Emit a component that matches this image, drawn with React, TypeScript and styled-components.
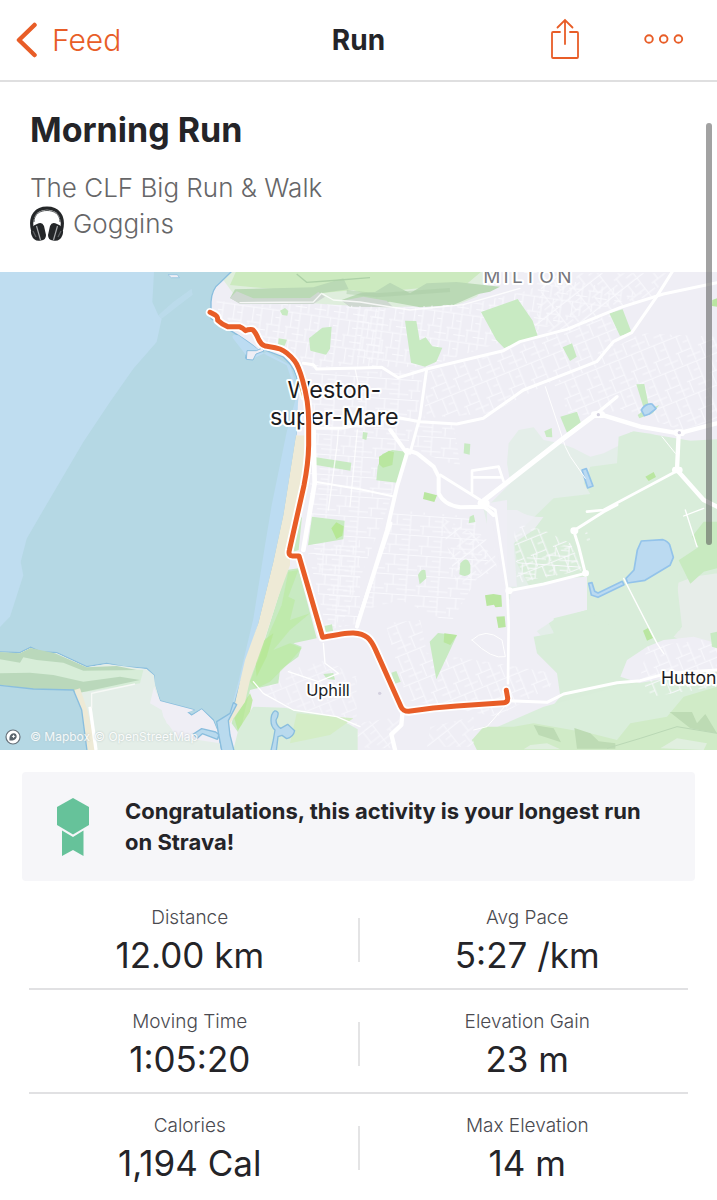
import React from "react";
import styled, { createGlobalStyle } from "styled-components";

const GlobalStyle = createGlobalStyle`
  * { box-sizing: border-box; }
  body {
    margin: 0;
    background: #ffffff;
    color: #242428;
    font-family: Inter, "Liberation Sans", sans-serif;
  }
  h1, h2, p, dl, dd, dt { margin: 0; }
`;

const Screen = styled.div`
  position: relative;
  width: 100%;
  overflow: hidden;
`;

const TopBar = styled.header`
  display: grid;
  grid-template-columns: 1fr auto 1fr;
  align-items: center;
  height: 82px;
  padding: 0 16px;
  border-bottom: 2px solid #dfdfe0;
`;

const BackLink = styled.a`
  display: flex;
  align-items: center;
  gap: 15px;
  color: #e85d27;
  font-size: 30px;
  font-weight: 300;
  line-height: 40px;
  text-decoration: none;
`;

const BarTitle = styled.h1`
  font-size: 28px;
  font-weight: 700;
  line-height: 40px;
`;

const Actions = styled.div`
  display: flex;
  justify-content: flex-end;
  align-items: center;
  gap: 62px;
  padding: 0 16px 2px 0;
`;

const IconButton = styled.button`
  display: flex;
  padding: 0;
  border: 0;
  background: none;
  color: #e85d27;
  cursor: pointer;
`;

const Intro = styled.section`
  padding: 26px 30px 30px;
`;

const ActivityTitle = styled.h2`
  font-size: 34px;
  font-weight: 700;
  line-height: 44px;
`;

const Description = styled.div`
  margin-top: 18px;
  color: #666668;
  font-size: 26px;
  font-weight: 300;
  line-height: 36px;
`;

const Playlist = styled.p`
  display: flex;
  align-items: center;
  gap: 9px;
`;

const MapPanel = styled.section`
  position: relative;
  overflow: hidden;
`;

const MapDrawing = styled.svg`
  display: block;
  width: 100%;
  height: auto;
`;

const Attribution = styled.div`
  position: absolute;
  left: 5px;
  bottom: 4px;
  display: flex;
  align-items: center;
  gap: 9px;
  font-size: 12px;
  line-height: 18px;
`;

const Credits = styled.span`
  display: flex;
  gap: 4px;
`;

const Credit = styled.a`
  color: #ffffff;
  opacity: 0.85;
  text-decoration: none;
  text-shadow: 0 0 2px #a8b8b8;
`;

const Achievement = styled.section`
  display: flex;
  align-items: center;
  gap: 35px;
  min-height: 109px;
  margin: 22px 22px 0;
  padding: 20px 34px;
  border-radius: 4px;
  background: #f6f6f9;

  svg { flex-shrink: 0; }
`;

const AchievementText = styled.p`
  font-size: 22px;
  font-weight: 700;
  line-height: 31px;
`;

const Stats = styled.dl`
  padding: 5px 22px 0;
`;

const StatRow = styled.div`
  position: relative;
  display: grid;
  grid-template-columns: 1fr 2px 1fr;
  align-items: center;
  height: 104px;

  &:not(:last-child)::after {
    content: "";
    position: absolute;
    right: 7px;
    bottom: 0;
    left: 7px;
    height: 2px;
    background: #e1e1e3;
  }
`;

const StatDivider = styled.span`
  height: 44px;
  margin-top: 4px;
  background: #e4e4e5;
`;

const Stat = styled.div`
  padding-top: 6px;
  text-align: center;
`;

const StatLabel = styled.dt`
  color: #4a4a50;
  font-size: 19px;
  font-weight: 300;
  line-height: 28px;
`;

const StatValue = styled.dd`
  font-size: 35px;
  font-weight: 400;
  line-height: 46px;
`;

const ScrollThumb = styled.div`
  position: absolute;
  top: 123px;
  right: 5px;
  width: 6px;
  height: 422px;
  border-radius: 3px;
  background: rgba(90, 90, 90, 0.56);
`;

const BackIcon = () => (
  <svg width="21" height="36" viewBox="0 0 21 36" fill="none" aria-hidden="true">
    <path d="M18.500 3 3 18l15.500 15" stroke="currentColor" strokeWidth="4.500" strokeLinecap="round" strokeLinejoin="round" />
  </svg>
);

const ShareIcon = () => (
  <svg width="32" height="44" viewBox="0 0 32 44" fill="none" stroke="currentColor" strokeWidth="1.800" strokeLinecap="round" aria-hidden="true">
    <path d="M11 15H4Q3 15 3 16V40Q3 41 4 41H28Q29 41 29 40V16Q29 15 28 15H21" />
    <path d="M16 27V3M8.500 10.500 16 3l7.500 7.500" />
  </svg>
);

const MoreIcon = () => (
  <svg width="42" height="14" viewBox="0 0 42 14" fill="none" stroke="currentColor" strokeWidth="1.900" aria-hidden="true">
    <circle cx="6" cy="7" r="3.800" />
    <circle cx="20.700" cy="7" r="3.800" />
    <circle cx="35.400" cy="7" r="3.800" />
  </svg>
);

const HeadphonesIcon = () => (
  <svg width="34" height="36" viewBox="0 0 34 36" aria-hidden="true">
    <path d="M2.500 24C-1 9 7 2.200 17 2.200S35 9 31.500 24" fill="none" stroke="#252729" strokeWidth="3.200" />
    <path d="M4 16C4 8 10 4.500 17 4.500S30 8 30 16" fill="none" stroke="#55585a" strokeWidth="1" />
    <path d="M7 18Q12 15 14 20L16 29Q16 34 11 34.500 4 36 1.500 29-1 21 7 18z" fill="#242628" />
    <path d="M27 18Q22 15 20 20L18 29Q18 34 23 34.500 30 36 32.500 29 35 21 27 18z" fill="#242628" />
    <path d="M6.500 20 10.500 34M27.500 20 23.500 34" stroke="#a9abad" strokeWidth="1.200" />
    <path d="m3 25 3 6M31 25l-3 6" stroke="#5d6062" strokeWidth="1.300" />
  </svg>
);

const RibbonIcon = () => (
  <svg width="34" height="60" viewBox="0 0 34 60" fill="#66c29a" aria-hidden="true">
    <path d="M17 1 33 10V28L17 37.500 1 28V10z" />
    <path d="M6 33.500 17 40l10.500-6.500V59L17 53 6 59z" />
  </svg>
);

const MapboxIcon = () => (
  <svg width="16" height="16" viewBox="0 0 16 16" aria-hidden="true">
    <circle cx="8" cy="8" r="7" fill="#ffffff" stroke="#66717a" strokeWidth="1.200" />
    <path d="M4.500 11.500C4 7 6 4 9 4.300c3 .4 3.500 4 1.500 5.800-1.500 1.500-4 1.700-6 1.400z" fill="#59636b" />
    <path d="m8.500 5.500.7 1.200 1.300.6-1.300.6-.7 1.300-.7-1.300-1.200-.6 1.200-.6z" fill="#ffffff" />
  </svg>
);

/* Residential street meshes, one pattern for each street direction. */
const meshes = [
  { id: "mesh-a", angle: 8, w: 58, h: 84 },
  { id: "mesh-b", angle: -22, w: 72, h: 90 },
  { id: "mesh-c", angle: -38, w: 84, h: 76 },
  { id: "mesh-d", angle: 4, w: 96, h: 60 },
];

const StreetPattern = ({ id, angle, w, h }: { id: string; angle: number; w: number; h: number }) => (
  <pattern id={id} width={w} height={h} patternUnits="userSpaceOnUse" patternTransform={`rotate(${angle})`}>
    <path
      d={`M0 4H${w}M0 ${h * 0.58}H${w * 0.7}M${w * 0.28} 4V${h * 0.58}M${w * 0.7} 4V${h}M${w * 0.1} ${h * 0.58}V${h}M${w * 0.45} ${h * 0.3}H${w * 0.7}M${w * 0.4} ${h * 0.8}H${w}`}
      fill="none"
      stroke="#f9f9fd"
      strokeWidth="3"
    />
  </pattern>
);

/* The drawing uses three units per pixel, in four tiles that share one origin each. */
const NW = "translate(0 -6)";
const NE = "translate(1071 -6)";
const SW = "translate(0 714)";
const SE = "translate(1071 714)";

const ROUTE =
  "M630 121 646 129Q654 134 653 145 664 156 683 164L718 164Q730 169 737 176 744 172 758 173 767 180 776 203 783 218 795 222C810 225 820 224 840 231 858 238 872 252 884 267 896 282 902 304 908 326 922 374 926 410 926 450V520C925 570 918 610 912 640L868 835Q864 851 878 852H897L968 1096Q1040 1082 1060 1083C1100 1085 1112 1102 1126 1132L1203 1304Q1209 1318 1226 1318L1300 1308 1370 1302 1512 1292Q1524 1291 1523 1278L1519 1255";

const RouteMap = () => (
  <MapDrawing viewBox="0 0 2151 1434" role="img" aria-label="Route map of Weston-super-Mare">
    <defs>
      {meshes.map((m) => (
        <StreetPattern key={m.id} {...m} />
      ))}
    </defs>
    <rect width="2151" height="1434" fill="#efeef5" />

    {/* countryside */}
    <g transform={NE}>
      <path d="M455 520 485 480 530 472 560 510 610 520 650 535 700 560 740 550 800 520 820 486 880 490 930 510 1080 515V1200H640L450 980 430 930 380 720 460 640 450 580z" fill="#e4eee9" />
      <path d="M785 500 830 484 930 500 1000 512 1080 508V1200H650L480 880 470 800 590 685 700 672 680 640 700 590 780 580z" fill="#d9edda" />
      <path d="M390 700 450 690 450 970 460 1010 390 1010z" fill="#efeef5" />
    </g>
    <g transform={SE}>
      <path d="M400 0H480Q520 25 560 20L530 60 470 100 480 230 440 230z" fill="#efeef5" opacity=".8" />
      <path d="M460 245 620 205 690 200 710 250 690 300 590 330 530 370 520 430 590 490 610 550 560 590 450 560z" fill="#efeef5" />
      <path d="M530 380 590 370V325L690 300 780 180H960V700H520L560 620 610 560 600 490 540 430z" fill="#d9edda" />
      <path d="M960 220 1010 200 1080 190V450L950 380 975 350z" fill="#e7ede9" />
      <path d="M640 0H1080V190L970 180 960 250 970 360 860 410 690 300 690 190 660 150 640 60z" fill="#d9edda" />
      <path d="M790 500 810 450 870 410 920 390 1010 380 1080 400V500L990 570 880 560 850 520z" fill="#efeef5" />
      <path d="M345 690 400 660 560 590 780 530 1080 480V720H360z" fill="#daeedb" />
      <path d="M345 690 380 650 470 650 530 640 700 670 780 690 820 640 930 620 980 560 1080 530V720H360z" fill="#d0ebc7" />
      <path d="M530 645 590 655 612 697 545 675zM652 654 700 670 725 694 775 700V716H660zM938 606H1005L1020 640 1045 612 1080 670 1000 655z" fill="#bddbb4" />
      <path d="m750 715 100-30 110-35 120 20" fill="none" stroke="#bad8b5" strokeWidth="3" />
      <path d="M910 715 960 685 1050 700 1040 720zM520 705 570 700 610 718H500z" fill="#e0efdf" />
      <path d="m1005 80 35-45h40v140l-40 10-40 36-35-70 60-40z" fill="#c8eac0" />
    </g>

    {/* hills at the north edge */}
    <g transform={NW}>
      <path d="M680 0H1500L1430 80 1370 105 1160 112 1000 104 940 100 720 98 670 30z" fill="#dfeedd" />
      <path d="M710 0H1450L1400 42 1200 60 1150 90 1060 60 960 70 690 45z" fill="#cceabf" />
      <path d="M705 58 940 52 1030 25 1046 58 970 68 940 100H720L690 84z" fill="#bad9b5" />
      <path d="M690 84 710 64 760 85 930 84 955 66 975 80 940 102H720z" fill="#cfd8d1" />
      <path d="M1025 90 1080 70 1125 66 1170 38 1230 70 1280 40 1370 36 1500 50 1470 65 1435 72 1360 105 1260 112 1170 95 1050 110z" fill="#bad9b5" />
      <path d="M1025 92 1090 80 1160 92 1180 112 1050 110z" fill="#cfd8d1" />
      <path d="m890 12 30 25 60-4 130-10" fill="none" stroke="#add1a7" strokeWidth="4" />
      <path d="M1040 66 1130 76 1350 60" fill="none" stroke="#a9caa5" opacity=".45" strokeWidth="12" />
    </g>

    {/* residential streets */}
    <g transform={NW}>
      <path d="M650 90 730 104 950 102 1150 112V275L940 295 880 260 790 210 760 165 650 145z" fill="url(#mesh-a)" />
      <path d="M930 310 1270 300 1250 440 1160 720 1020 1080 930 800z" fill="url(#mesh-d)" />
    </g>
    <g transform={NE}>
      <path d="M0 120 350 100 520 60 560 20 860 70 780 100 480 200 210 290 0 290z" fill="url(#mesh-a)" />
      <path d="M560 10H930L890 75 640 180 530 190z" fill="url(#mesh-c)" />
      <path d="M215 305 480 230 770 130 820 190 710 270 400 430 200 445z" fill="url(#mesh-b)" />
      <path d="M590 340 850 190 1080 200V450L970 480 800 420 640 440z" fill="url(#mesh-b)" />
      <path d="M180 450 290 460 310 590 170 540z" fill="url(#mesh-d)" />
    </g>
    <g transform={SE}>
      <path d="M110 0 350 20 400 140 280 340 130 270 20 300z" fill="url(#mesh-d)" />
      <path d="M250 20 410 100 420 180 300 230z" fill="url(#mesh-c)" />
      <path d="M85 340 190 330 210 430 420 460 590 490 580 530 420 620 150 570z" fill="url(#mesh-b)" />
      <path d="M470 40 560 60 640 100 680 180 480 220zM680 40 700 90 690 100z" fill="url(#mesh-b)" />
      <path d="M480 150 640 100 675 180 485 215z" fill="url(#mesh-d)" />
      <path d="M870 410 1080 385V530L880 560 850 500z" fill="url(#mesh-b)" />
      <path d="M0 640 130 620 100 715H0zM220 650 350 620V710H210z" fill="url(#mesh-c)" opacity=".8" />
    </g>
    <g transform={SW}>
      <path d="M925 130 1080 90V340L980 360z" fill="url(#mesh-d)" />
      <path d="M870 480 980 450 1070 500V650L900 600 780 550z" fill="url(#mesh-b)" opacity=".75" />
    </g>

    {/* parks */}
    <g fill="#c8eac2">
      <g transform={NW}>
        <path d="m840 122 15-8 10 9-3 14-15-2zM836 205l25 4-7 18-20-3zM927 205l40-32 28-3-5 66-12 18-47-12zM948 562l106 16-3 24-103-17z" />
      </g>
      <g transform={NE}>
        <path d="m372 126 110-39 45 65 15 45-100 38-24-25zM144 152l34 1 10 58 18-9 20 27 30 4-18 42-34 15-42-12zM757 130l40-12 27 70-35 10zM617 232l28-12 14 40-20 13zM838 343l24-1 15 75 30-12-20 25-40 15-5-10 20-15zM610 440l50-15 12 35-42 28zM562 484l22-10 2 28-18-1zM322 520l18 2-2 32-18-4zM62 590l14-38 30-12 40 5-20 94-68-8zM18 486l14 2-4 22-12-4z" />
        <path d="m66 560 30-18 15 5-5 38-28 8-12-10zM202 666l38 10-8 20-34-9zM865 620l25-14 7 15-22 12zM1066 90l14-5v25l-15-2z" fill="#b9e6a0" />
      </g>
      <g transform={SE}>
        <path d="m218 395 25-26 57 7-62 132zM183 195q10-20 22-14l3 24-20 18zM310 160q20-25 30 5v25q-12 15-33 3zM103 488l15-5 13 32-17 6zM338 20l12-6 5 22-20 4zM1060 370l20-5v50l-15-5z" />
        <path d="m384 256 25-4 24 4 2 34-20 2-4-8-22 4zM418 320l25-1 3 32-22 3zM262 370l38 5-20 30-20-8zM858 362l15-8 15 30-18 8z" fill="#b9e6a0" />
      </g>
      <g transform={SW}>
        <path d="m936 20 98 12-4 56-106 18zM974 348l22-5 3 20-22 3zM970 492l30-3 5 20-24-2zM890 40 906 20 896 120 880 125z" />
        <path d="m860 180 35-5 55 210-70 15 25 10-10 30-55 40-5 40-85 20-15 60-15 75-25-35 20-80 60-110z" />
        <path d="m865 185-20 100-50 115-45 115 20 20 40-20 60-60 35-40-35-15-50 20 50-60 60-50-60 20 15-60-20-10 30-80z" fill="#bce9a4" opacity=".75" />
        <path d="M750 550l8 20-20 90-20 15-15-50zM780 400 820 370 800 440 770 500 765 450z" fill="#b6e795" opacity=".8" />
        <path d="m994 55 15-18 22 12-4 28-18 10z" fill="#b6e795" />
        <path d="m760 590 93 3 150 25 70 40v62H700l15-60 25-40z" fill="#d9edda" />
        <path d="m890 610 170 15-70 50-120 25z" fill="#d4edc6" />
      </g>
    </g>

    {/* open water */}
    <path d="M-10-10H700L693 0 660 32Q635 50 633 90V140L715 190Q760 220 770 230L740 238 737 258 758 262 766 240 790 232 850 255Q895 295 893 340L897 430 888 490 850 730 820 870 775 1054 735 1164 705 1294 683 1354 690 1400 703 1444H667L655 1384 640 1344 605 1311 575 1329 560 1317 583 1314 480 1287 462 1234V1210L440 1189 370 1184 320 1174 260 1184 170 1142 120 1139 92 1126 60 1142-10 1139z" fill="#b5d8e4" stroke="#8abede" strokeWidth="4" />
    <path d="M0 0H462L457 90 475 130 485 140 470 210 400 290 330 390 250 510 130 714 80 800 62 870 70 910 30 1034 0 1065z" fill="#bfddf0" />
    <path d="M475 130 520 90 575 50 578 68 530 105 485 140z" fill="#bfddf0" opacity=".6" />
    <path d="M715 190Q690 185 700 200L750 265 800 240 870 280 892 350 897 430 888 490 850 730 820 870 775 1054 705 1280 683 1350 715 1230 760 1040 795 820 815 700 860 480 890 370 860 280 800 250z" fill="#bcdcf2" />
    <path d="M504 8h28l6 9h-24z" fill="#efeef5" stroke="#8abede" strokeWidth="2" />
    <path d="M741 236h28l18-8 5 9-24 9-9 18-20-2z" fill="#efeef5" stroke="#8abede" strokeWidth="3" />

    {/* beach */}
    <path d="M888 490 915 490 910 600 890 730 870 850V880L835 974 790 1114 750 1224 735 1290 690 1354 683 1350 705 1294 735 1164 775 1054 820 870 850 730z" fill="#eeead6" />
    <path d="M895 370 900 350 920 430V490H890z" fill="#efeef5" />

    {/* headland and estuary */}
    <g transform={SW}>
      <path d="M0 428 60 430 92 414 120 428 170 430 260 472 320 462 440 478 462 496 465 522 480 573 490 620 530 680 660 700V720H262L245 600 222 540 100 537 0 525z" fill="#e4eee8" />
      <path d="M0 428 60 430 92 414 130 430 260 475 430 480 420 520 260 545 100 535 0 525z" fill="#d7edd8" />
      <path d="M0 426 60 430 92 414 165 430 260 472 350 468 410 480 250 482 190 458 110 450 70 442 60 458 0 448zM0 490 90 488 160 495 250 515 360 500 420 510 240 548 100 538 0 525z" fill="#bad8bb" />
      <path d="M462 530 480 573 583 600 560 608 575 618 605 598 640 632 655 668 600 665 560 690 500 640 485 600 450 580z" fill="#efeef5" />
      <path d="M223 540 240 535 262 600 290 720H262L245 600z" fill="#eeead6" />
      <path d="m270 590 18 130" fill="none" stroke="#ffffff" strokeWidth="10" />
      <path d="m275 595 0-45 130-28" fill="none" stroke="#f7f9f6" strokeWidth="4" />
      <path d="M-10 525 100 537 220 540 245 600 262 730H-10z" fill="#b5d8e4" stroke="#8abede" strokeWidth="4" />
      <path d="m580 672 25-16 42 10 10 8-5 14-45-17-15 14zM667 730 655 668 650 635 690 610 700 578 710 584 685 632 690 675 704 730z" fill="#b9daee" stroke="#8abede" strokeWidth="4" strokeLinejoin="round" />
      <path d="M811 730 820 690 825 660Q808 645 815 615 824 594 834 608 836 618 828 630 828 646 842 655L863 643 884 662Q880 682 860 686L846 676 834 680 828 730z" fill="#b9daee" stroke="#8abede" strokeWidth="4" strokeLinejoin="round" />
    </g>

    {/* lakes */}
    <g fill="#bbdaf1" stroke="#93c3ea" strokeWidth="5" strokeLinejoin="round">
      <g transform={NE}>
        <path d="M853 420q12-20 32-18l12 14-20 16-15 5zM675 600l13-4 20 52-16 6z" />
      </g>
      <g transform={SE}>
        <path d="m807 205 24-25 10-60 12-27 65-4q15 5 20 15l11 38-10 24-75 45-52 8zM695 220l10-2 8 26 10 5 73-35 5 10-78 38-20-7z" />
      </g>
    </g>

    {/* main roads */}
    <g fill="none" stroke="#ffffff" strokeLinejoin="round" strokeLinecap="round">
      <g transform={NW} strokeWidth="9">
        <path d="M910 280 940 284 950 297 1080 294 1145 292 1195 323 1280 297 1510 242 1560 215 1700 178 1860 113 1990 72 2151 38" />
        <path d="M950 475 1030 474 1180 440 1260 455 1370 462 1450 445 1570 360 1700 310 1790 275 1840 215 1895 188 1970 80 2020 0" />
        <path d="M1280 297 1260 440 1230 550" />
        <path d="M940 450 944 640 910 840" strokeWidth="14" />
        <path d="M945 635 1080 658 1185 680" strokeWidth="6" />
        <path d="M1015 480 1012 520 985 720M1072 480 1050 710M1065 295 1085 390M720 98 940 96 965 70 1000 90 1080 96 1230 120 1390 104 1560 55" strokeWidth="4" opacity=".8" />
      </g>
      <g transform={NE}>
        <path d="M100 480 150 550 120 650 90 780 0 1070" strokeWidth="12" />
        <path d="M150 540 180 550 230 590 245 620 245 670Q260 705 310 712L380 710Q395 720 410 735" strokeWidth="12" />
        <path d="M250 615 370 690M345 670 345 602 425 590 440 635M345 622H430M690 725 740 720 965 600" strokeWidth="8" />
        <path d="M370 700 620 505 720 430" strokeWidth="15" />
        <path d="M720 430 780 380" strokeWidth="10" />
        <path d="M720 430 850 470 965 490 1080 460M965 490 960 600 1040 690 1080 710" strokeWidth="13" />
        <path d="m565 350 60 180 15 30 45 65M915 500l40 50" strokeWidth="3" />
        <path d="M712 434h22M960 488h14M955 600h12M372 700h16" strokeWidth="20" />
      </g>
      <g transform={SE}>
        <path d="M380 -20 415 0 430 100 450 230 455 340 453 520" strokeWidth="8" />
        <path d="M455 242 560 222 685 190 665 110 650 62 740 5 780 -16" strokeWidth="9" />
        <path d="M455 572 570 577 620 552 780 518 850 512 930 490 1080 480" strokeWidth="9" />
        <path d="M455 242h2M685 190h1M650 62h4" strokeWidth="20" />
        <path d="m137 600-4 45-30 28 12 50" strokeWidth="13" />
        <path d="M800 205 900 400 920 430M985 0 1020 110M980 18 1040 -5" strokeWidth="4" />
        <path d="M460 570 390 650 350 660M345 390q40-40 90 0l10 50q-40 10-100-50z" strokeWidth="3" />
      </g>
      <g transform={SW}>
        <path d="m1072 340 100-300" strokeWidth="11" />
        <path d="m760 515 30 35 90 50 130 20 70 30M970 400l5 60 40 30-60 25-90-30" strokeWidth="4" />
      </g>
    </g>
    <g fill="#d3d0df">
      <circle cx="1795" cy="428" r="5" />
      <circle cx="2038" cy="482" r="5" />
      <circle cx="1139" cy="1264" r="5" />
    </g>

    {/* place names */}
    <g fontFamily="Inter, sans-serif" fill="#1c1c1e" stroke="#ffffff" strokeWidth="12" strokeLinejoin="round" paintOrder="stroke" textAnchor="middle">
      <text x="1003" y="377" fontSize="70">Weston-</text>
      <text x="1003" y="460" fontSize="70">super-Mare</text>
      <text x="984" y="1273" fontSize="49">Uphill</text>
      <text x="2066" y="1237" fontSize="53">Hutton</text>
      <text x="1587" y="33" fontSize="57" letterSpacing="10" fill="#77777d">MILTON</text>
    </g>

    {/* recorded route */}
    <g fill="none" strokeLinecap="round" strokeLinejoin="round">
      <path d={ROUTE} stroke="#ffffff" strokeWidth="26" />
      <path d={ROUTE} stroke="#e85d27" strokeWidth="15" />
    </g>
  </MapDrawing>
);

type StatItem = { label: string; value: string };

const rows: [StatItem, StatItem][] = [
  [{ label: "Distance", value: "12.00 km" }, { label: "Avg Pace", value: "5:27 /km" }],
  [{ label: "Moving Time", value: "1:05:20" }, { label: "Elevation Gain", value: "23 m" }],
  [{ label: "Calories", value: "1,194 Cal" }, { label: "Max Elevation", value: "14 m" }],
];

const StatCell = ({ label, value }: StatItem) => (
  <Stat>
    <StatLabel>{label}</StatLabel>
    <StatValue>{value}</StatValue>
  </Stat>
);

export default function App() {
  return (
    <>
      <GlobalStyle />
      <Screen>
        <TopBar>
          <BackLink href="#feed">
            <BackIcon />
            Feed
          </BackLink>
          <BarTitle>Run</BarTitle>
          <Actions>
            <IconButton type="button" aria-label="Share">
              <ShareIcon />
            </IconButton>
            <IconButton type="button" aria-label="More options">
              <MoreIcon />
            </IconButton>
          </Actions>
        </TopBar>
        <main>
          <Intro>
            <ActivityTitle>Morning Run</ActivityTitle>
            <Description>
              <p>The CLF Big Run &amp; Walk</p>
              <Playlist>
                <HeadphonesIcon />
                Goggins
              </Playlist>
            </Description>
          </Intro>
          <MapPanel>
            <RouteMap />
            <Attribution>
              <MapboxIcon />
              <Credits>
                <Credit href="#mapbox">© Mapbox</Credit>
                <Credit href="#openstreetmap">© OpenStreetMap</Credit>
              </Credits>
            </Attribution>
          </MapPanel>
          <Achievement>
            <RibbonIcon />
            <AchievementText>Congratulations, this activity is your longest run on Strava!</AchievementText>
          </Achievement>
          <Stats>
            {rows.map(([left, right]) => (
              <StatRow key={left.label}>
                <StatCell {...left} />
                <StatDivider />
                <StatCell {...right} />
              </StatRow>
            ))}
          </Stats>
        </main>
        <ScrollThumb />
      </Screen>
    </>
  );
}
